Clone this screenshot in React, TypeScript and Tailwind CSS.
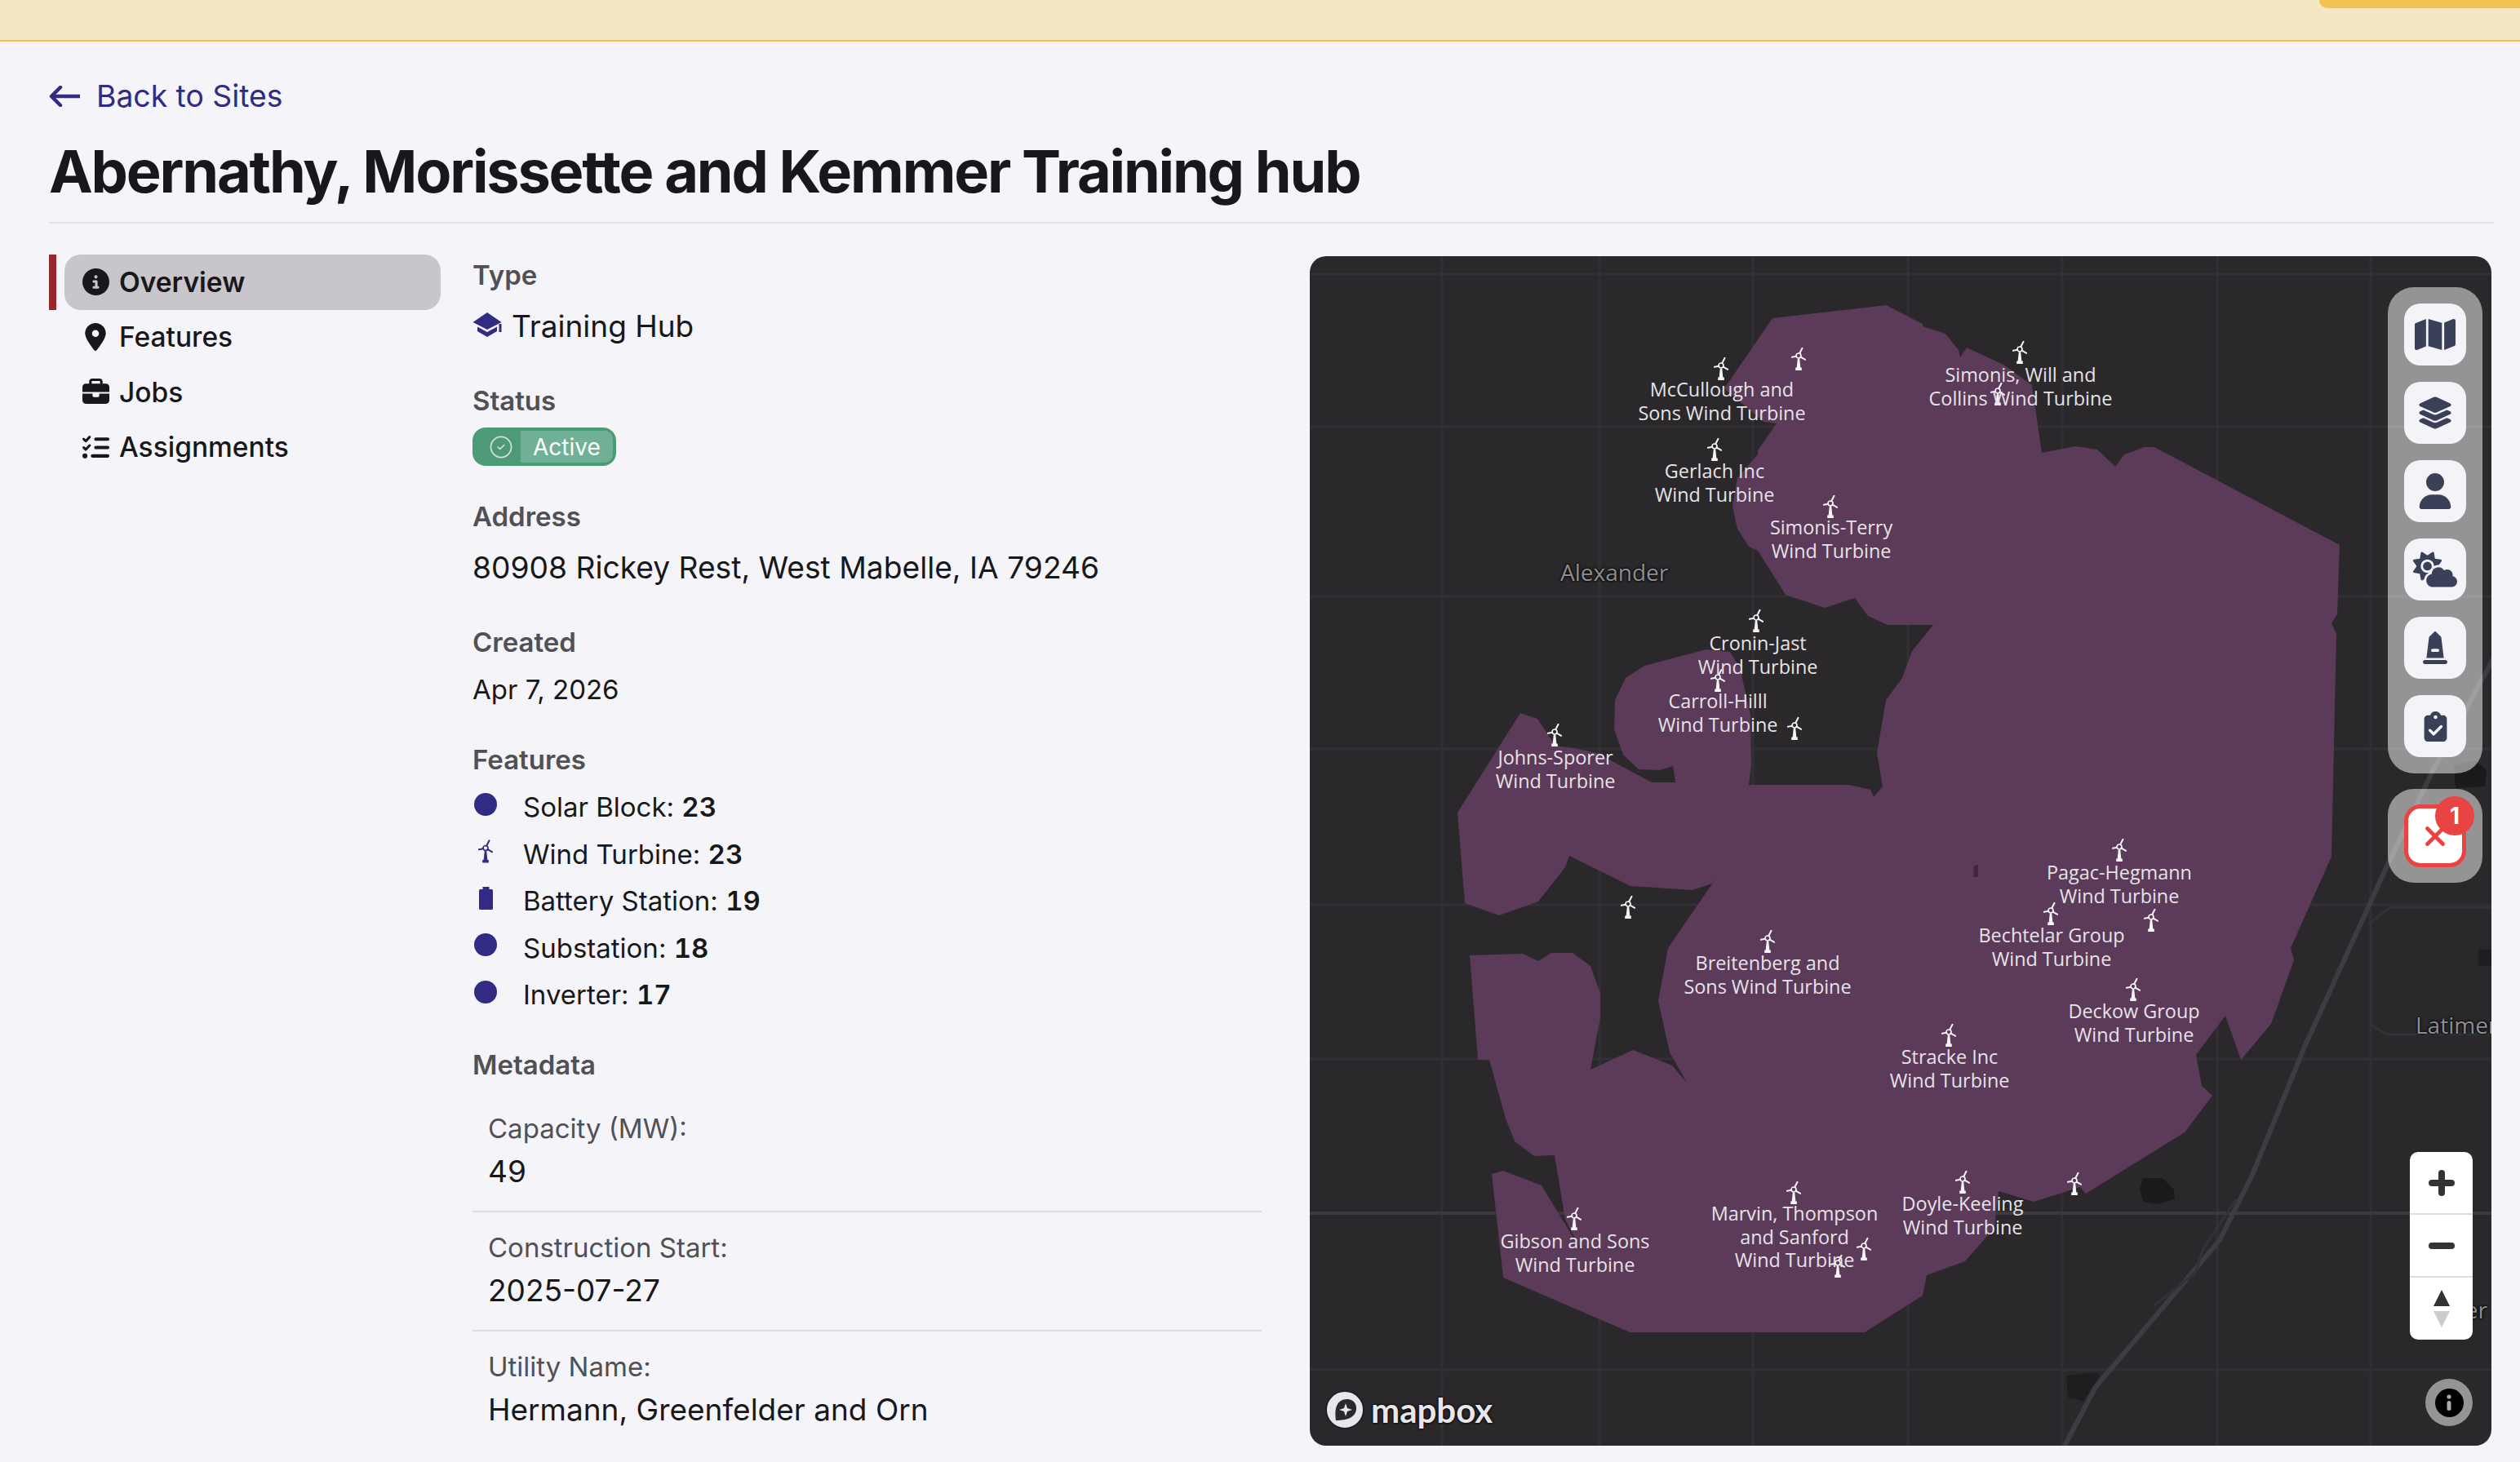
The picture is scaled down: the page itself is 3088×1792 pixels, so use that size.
import type { ReactNode } from 'react';
import { CircleCheck, X } from 'lucide-react';
import {
  FaBriefcase,
  FaCircleInfo,
  FaClipboardCheck,
  FaCloudSun,
  FaLayerGroup,
  FaListCheck,
  FaLocationDot,
  FaMap,
  FaMonument,
  FaUser,
} from 'react-icons/fa6';

// map origin in page pixels, pins below are written in page pixels too
const MAP_X = 1605;
const MAP_Y = 314;

const SITE_SHAPE =
  '2172,390 2311,374 2356,397 2356,400 2384,409 2400,429 2402,438 2410,426 2455,447 2490,472 2502,555 2543,547 2570,551 2592,572 2603,557 2628,548 2640,548 2867,668 2864,753 2857,764 2863,777 2857,1050 2807,1162 2811,1177 2783,1255 2746,1299 2727,1245 2691,1293 2698,1331 2711,1343 2677,1388 2556,1463 2549,1455 2492,1473 2449,1460 2444,1505 2408,1546 2361,1563 2356,1588 2285,1633 1997,1633 1842,1566 1828,1439 1842,1435 1889,1453 1939,1535 1918,1495 1905,1416 1880,1417 1856,1399 1845,1371 1825,1299 1811,1299 1801,1171 1866,1169 1885,1178 1901,1168 1927,1168 1949,1184 1961,1217 1961,1247 1949,1311 2001,1287 2049,1306 2067,1327 2046,1290 2032,1227 2044,1162 2079,1111 2108,1069 2098,1083 2074,1091 1998,1086 1923,1049 1918,1063 1885,1105 1837,1122 1795,1107 1786,996 1863,874 1884,881 1906,914 1928,917 1957,923 2024,959 2053,959 2050,939 2034,944 2008,943 1989,925 1978,894 1979,858 1992,831 2015,816 2091,796 2120,799 2132,818 2145,876 2146,938 2143,962 2266,962 2292,968 2296,977 2307,964 2300,923 2311,858 2331,831 2343,798 2369,766 2313,766 2289,755 2273,733 2236,745 2188,729 2154,675 2143,670 2129,648 2123,621 2129,586 2154,557 2154,552 2177,519 2161,517 2113,476';

const TURBINES = [
  [2109, 452], [2204, 440], [2475, 432], [2448, 483], [2101, 551], [2243, 621],
  [2152, 761], [2105, 834], [2199, 893], [1905, 901], [1995, 1112], [2597, 1042],
  [2513, 1120], [2636, 1128], [2614, 1213], [2166, 1154], [2388, 1269], [2405, 1449],
  [2542, 1451], [2198, 1462], [2284, 1531], [2252, 1552], [1929, 1494],
];

const LABELS = [
  { x: 2110, y: 491, lines: ['McCullough and', 'Sons Wind Turbine'] },
  { x: 2476, y: 473, lines: ['Simonis, Will and', 'Collins Wind Turbine'] },
  { x: 2101, y: 591, lines: ['Gerlach Inc', 'Wind Turbine'] },
  { x: 2244, y: 660, lines: ['Simonis-Terry', 'Wind Turbine'] },
  { x: 2154, y: 802, lines: ['Cronin-Jast', 'Wind Turbine'] },
  { x: 2105, y: 873, lines: ['Carroll-Hilll', 'Wind Turbine'] },
  { x: 1906, y: 942, lines: ['Johns-Sporer', 'Wind Turbine'] },
  { x: 2597, y: 1083, lines: ['Pagac-Hegmann', 'Wind Turbine'] },
  { x: 2514, y: 1160, lines: ['Bechtelar Group', 'Wind Turbine'] },
  { x: 2615, y: 1253, lines: ['Deckow Group', 'Wind Turbine'] },
  { x: 2166, y: 1194, lines: ['Breitenberg and', 'Sons Wind Turbine'] },
  { x: 2389, y: 1309, lines: ['Stracke Inc', 'Wind Turbine'] },
  { x: 2405, y: 1489, lines: ['Doyle-Keeling', 'Wind Turbine'] },
  { x: 2199, y: 1516, lines: ['Marvin, Thompson', 'and Sanford', 'Wind Turbine'] },
  { x: 1930, y: 1535, lines: ['Gibson and Sons', 'Wind Turbine'] },
];

const FEATURES = [
  { name: 'Solar Block', count: 23, icon: 'dot' },
  { name: 'Wind Turbine', count: 23, icon: 'wind' },
  { name: 'Battery Station', count: 19, icon: 'battery' },
  { name: 'Substation', count: 18, icon: 'dot' },
  { name: 'Inverter', count: 17, icon: 'dot' },
];

const METADATA = [
  { label: 'Capacity (MW):', value: '49' },
  { label: 'Construction Start:', value: '2025-07-27' },
  { label: 'Utility Name:', value: 'Hermann, Greenfelder and Orn' },
];

const NAV = [
  { label: 'Overview', icon: <FaCircleInfo size={33} />, active: true },
  { label: 'Features', icon: <FaLocationDot size={34} /> },
  { label: 'Jobs', icon: <FaBriefcase size={33} /> },
  { label: 'Assignments', icon: <FaListCheck size={33} /> },
];

const TurbineIcon = ({ className }: { className: string }) => (
  <svg viewBox="0 0 18 28" className={className} fill="none" stroke="currentColor" aria-hidden>
    <circle cx="9" cy="10" r="3" strokeWidth="1.7" />
    <path d="M10.2 7.2 13.5 0.8M6.2 10.8 0.8 11.8M11.6 11.6 17.2 14.8" strokeWidth="2" strokeLinecap="round" />
    <path d="M7.8 13.5h2.4l1.2 11.5H6.6z" fill="currentColor" stroke="none" />
    <rect x="5.2" y="24.5" width="7.6" height="3.5" fill="currentColor" stroke="none" />
  </svg>
);

const FeatureIcon = ({ icon }: { icon: string }) => {
  if (icon === 'wind') return <TurbineIcon className="h-[29px] w-[18px] text-[#312b83]" />;
  if (icon === 'battery') {
    return (
      <svg viewBox="0 0 17 28" className="h-[28px] w-[17px] text-[#312b83]" fill="currentColor" aria-hidden>
        <path d="M4.5 0h8v3h3a1.5 1.5 0 0 1 1.5 1.5V26.5a1.5 1.5 0 0 1-1.5 1.5h-14A1.5 1.5 0 0 1 0 26.5V4.5A1.5 1.5 0 0 1 1.5 3h3z" />
      </svg>
    );
  }
  return <span className="block h-[28px] w-[28px] rounded-full bg-[#312b83]" />;
};

const SectionLabel = ({ children }: { children: ReactNode }) => (
  <h3 className="h-[48px] text-[33px] leading-[48px] font-semibold text-[#505055]">{children}</h3>
);

const ToolButton = ({ children }: { children: ReactNode }) => (
  <div className="flex h-[76px] w-[76px] items-center justify-center rounded-[20px] bg-[#f3f3f8] text-[#3a4057]">
    {children}
  </div>
);

const SiteMap = () => (
  <div className="relative mt-[2px] h-[1458px] w-[1448px] shrink-0 overflow-hidden rounded-[20px] bg-[#2a282b] font-['Open_Sans',sans-serif]">
    <svg viewBox={`${MAP_X} ${MAP_Y} 1448 1458`} className="absolute inset-0 h-full w-full" aria-hidden>
      {/* section grid */}
      <g stroke="#323034" strokeWidth="3" fill="none">
        <path d="M1767 314V1772M1960 314V1772M2148 314V1772M2338 314V1772M2527 314V1772M2717 314V1772M2905 314V1772" />
        <path d="M1605 336H3053M1605 523H3053M1605 731H3053M1605 918H3053M1605 1109H3053M1605 1298H3053M1605 1679H3053" />
      </g>
      <path d="M1605 1487H3053" stroke="#3c3a3e" strokeWidth="4" fill="none" />
      {/* roads */}
      <path
        d="M3056 806 2980 947 2923 1066 2824 1283 2760 1440 2720 1520 2644 1610 2568 1700 2530 1772"
        stroke="#3e3c40"
        strokeWidth="6"
        fill="none"
      />
      <path d="M2740 1470 2700 1530 2690 1560 2640 1600" stroke="#343236" strokeWidth="3" fill="none" />
      <path d="M2905 1256V1130L2930 1112H3053M2905 1256L2925 1268H3053" stroke="#343236" strokeWidth="3" fill="none" />
      {/* ponds */}
      <path d="M2626 1444h24l14 14 1 12-22 6-17-3-4-16z" fill="#1a191b" />
      <path d="M2532 1686l38-4 3 4-20 31-19-4z" fill="#1e1d1f" />
      <path d="M3007 938l26-6 14 12-2 20-36 2z" fill="#1a191b" />
      <path d="M3037 1164h17v20h-17z" fill="#1e1d1f" />
      <polygon points={SITE_SHAPE} fill="#623c5e" fillOpacity="0.9" />
      <path d="M2419 1061l5-1v15h-6z" fill="#3a2a38" />
    </svg>

    {TURBINES.map(([x, y]) => (
      <div
        key={`${x}-${y}`}
        className="absolute -translate-x-1/2 -translate-y-1/2 text-[#f6f4f7]"
        style={{ left: x - MAP_X, top: y - MAP_Y }}
      >
        <TurbineIcon className="h-[29px] w-[18px]" />
      </div>
    ))}

    {LABELS.map((label) => (
      <div
        key={label.lines[0]}
        className="absolute -translate-x-1/2 -translate-y-1/2 text-center text-[23.4px] leading-[28.5px] whitespace-nowrap text-[#e6e3e7]"
        style={{ left: label.x - MAP_X, top: label.y - MAP_Y }}
      >
        {label.lines.map((line) => (
          <div key={line}>{line}</div>
        ))}
      </div>
    ))}

    <span className="absolute top-[369px] left-[307px] text-[28px] leading-[36px] text-[#8f8d90] [text-shadow:0_0_3px_#000,0_0_3px_#000]">
      Alexander
    </span>
    <span className="absolute top-[924px] left-[1355px] text-[28px] leading-[36px] text-[#8f8d90] [text-shadow:0_0_3px_#000,0_0_3px_#000]">
      Latimer
    </span>
    <span className="absolute top-[1273px] right-[5px] text-[28px] leading-[36px] text-[#8f8d90] [text-shadow:0_0_3px_#000,0_0_3px_#000]">
      er
    </span>

    {/* tool panels */}
    <div className="absolute top-[38px] right-[11px] flex flex-col gap-[19px]">
      <div className="flex w-[116px] flex-col items-center gap-[20px] rounded-[32px] bg-white/50 py-[20px]">
        <ToolButton><FaMap size={50} /></ToolButton>
        <ToolButton><FaLayerGroup size={44} /></ToolButton>
        <ToolButton><FaUser size={44} /></ToolButton>
        <ToolButton><FaCloudSun size={54} /></ToolButton>
        <ToolButton><FaMonument size={40} /></ToolButton>
        <ToolButton><FaClipboardCheck size={37} /></ToolButton>
      </div>
      <div className="flex h-[115px] w-[116px] items-center justify-center rounded-[32px] bg-white/50">
        <div className="relative flex h-[77px] w-[76px] items-center justify-center rounded-[20px] border-[5px] border-[#e94444] bg-white text-[#e94444]">
          <X size={38} strokeWidth={3} />
          <span className="absolute -top-[15px] -right-[15px] flex h-[48px] w-[48px] items-center justify-center rounded-full bg-[#e94444] font-['Inter',sans-serif] text-[28px] font-bold text-white">
            1
          </span>
        </div>
      </div>
    </div>

    {/* zoom control */}
    <div className="absolute top-[1098px] right-[23px] flex w-[77px] flex-col divide-y-2 divide-[#dcdcdc] rounded-[10px] bg-white">
      <div className="flex h-[77px] items-center justify-center">
        <svg viewBox="0 0 32 32" className="h-[32px] w-[32px]" stroke="#333" strokeWidth="8" strokeLinecap="round" aria-hidden>
          <path d="M4 16H28M16 4V28" />
        </svg>
      </div>
      <div className="flex h-[77px] items-center justify-center">
        <svg viewBox="0 0 32 32" className="h-[32px] w-[32px]" stroke="#333" strokeWidth="8" strokeLinecap="round" aria-hidden>
          <path d="M4 16H28" />
        </svg>
      </div>
      <div className="flex h-[76px] items-center justify-center">
        <svg viewBox="0 0 20 46" className="h-[46px] w-[20px]" aria-hidden>
          <path d="M10 0 20 20H0z" fill="#333" />
          <path d="M10 46 20 26H0z" fill="#ccc" />
        </svg>
      </div>
    </div>

    {/* attribution */}
    <div className="absolute right-[23px] bottom-[24px] flex h-[58px] w-[58px] items-center justify-center rounded-full bg-white/50">
      <span className="flex h-[35px] w-[35px] items-center justify-center rounded-full bg-black">
        <svg viewBox="0 0 8 20" className="h-[20px] w-[8px]" fill="#aaa" aria-hidden>
          <circle cx="4" cy="3" r="2.6" />
          <rect x="1.5" y="8" width="5" height="12" rx="2.5" />
        </svg>
      </span>
    </div>

    <div className="absolute bottom-[20px] left-[19px] flex items-center gap-[8px]">
      <svg viewBox="0 0 48 48" className="h-[48px] w-[48px]" aria-hidden>
        <circle cx="24" cy="24" r="23" fill="#e8e6ea" stroke="#1f1e20" strokeWidth="2" />
        <path d="M13 37C11 24 13 11 27 11c7 0 11 5 11 11 0 11-11 15-25 15z" fill="#2a282b" />
        <path d="M25 16l2 6 6 2-6 2-2 6-2-6-6-2 6-2z" fill="#e8e6ea" />
      </svg>
      <span className="font-['Lato',sans-serif] text-[42px] leading-[48px] font-bold text-[#e8e6ea] [text-shadow:0_0_3px_#000,0_0_3px_#000]">
        mapbox
      </span>
    </div>
  </div>
);

export default function App() {
  return (
    <div className="h-[1792px] overflow-hidden bg-[#f5f4f8] font-['Inter',sans-serif] text-[#18181b]">
      <div className="flex h-[51px] justify-end border-b-2 border-[#f4c04f] bg-[#f5e6c4]">
        <div className="h-[10px] w-[246px] rounded-bl-[16px] bg-[#f4c04f]" />
      </div>

      <main className="pt-[43px] pr-[32px] pl-[60px]">
        <a className="flex h-[48px] items-center gap-[20px] text-[37.3px] leading-[48px] text-[#312b83]">
          <svg viewBox="0 0 38 26" className="h-[26px] w-[38px]" fill="none" stroke="currentColor" strokeWidth="4.5" aria-hidden>
            <path d="M38 13H4M14 2 3 13l11 11" strokeLinejoin="round" strokeLinecap="round" />
          </svg>
          Back to Sites
        </a>
        <h1 className="mt-[28px] h-[80px] text-[72px] leading-[80px] font-bold tracking-[-0.03em] text-[#18181b]">
          Abernathy, Morissette and Kemmer Training hub
        </h1>
        <div className="mt-[22px] h-[2px] bg-[#e1e0e4]" />

        <div className="mt-[38px] flex">
          <nav className="w-[480px] shrink-0">
            {NAV.map((item) => (
              <div key={item.label} className="flex h-[67.5px] gap-[10px] text-[33.5px]">
                <span className={item.active ? 'w-[9px] bg-[#96272a]' : 'w-[9px]'} />
                <div
                  className={
                    item.active
                      ? 'flex flex-1 items-center rounded-[20px] bg-[#c8c6ca] pl-[21px] font-semibold'
                      : 'flex flex-1 items-center pl-[21px] font-medium'
                  }
                >
                  <span className="flex w-[34px] justify-center">{item.icon}</span>
                  <span className="ml-[12px]">{item.label}</span>
                </div>
              </div>
            ))}
          </nav>

          <section className="ml-[39px] w-[967px] shrink-0 pt-[1px]">
            <SectionLabel>Type</SectionLabel>
            <div className="mt-[13px] flex h-[52px] items-center text-[37px]">
              <svg viewBox="0 0 36 30" className="mr-[12px] h-[30px] w-[36px] -translate-y-[2px] text-[#312b83]" fill="currentColor" aria-hidden>
                <path d="M18 0 35.5 12 18 21 .5 12z" />
                <path d="M6 17.5 18 24l12-6.5V23L18 30 6 23z" />
                <path d="M32.5 14h3v10h-3z" />
              </svg>
              Training Hub
            </div>

            <div className="mt-[41px]">
              <SectionLabel>Status</SectionLabel>
            </div>
            <div className="mt-[9px] flex h-[47px] w-[176px] items-center rounded-[16px] bg-[#4f9a76] pr-[4px] text-white">
              <span className="flex w-[59px] justify-center pl-[10px]">
                <CircleCheck size={30} strokeWidth={1.4} className="text-[#d3e3da]" />
              </span>
              <span className="flex h-[39px] flex-1 items-center rounded-r-[10px] bg-[#6fb096] pl-[15px] text-[28px]">
                Active
              </span>
            </div>

            <div className="mt-[38px]">
              <SectionLabel>Address</SectionLabel>
            </div>
            <p className="mt-[13px] h-[52px] text-[37.2px] leading-[52px]">80908 Rickey Rest, West Mabelle, IA 79246</p>

            <div className="mt-[41px]">
              <SectionLabel>Created</SectionLabel>
            </div>
            <p className="mt-[10px] h-[48px] text-[33px] leading-[48px]">Apr 7, 2026</p>

            <div className="mt-[38px]">
              <SectionLabel>Features</SectionLabel>
            </div>
            <ul className="mt-[6.5px]">
              {FEATURES.map((feature) => (
                <li key={feature.name} className="flex h-[57.4px] items-center text-[33px]">
                  <span className="-mt-[8px] flex w-[32px] justify-center">
                    <FeatureIcon icon={feature.icon} />
                  </span>
                  <span className="ml-[30px]">
                    {feature.name}: <strong className="font-semibold tabular-nums">{feature.count}</strong>
                  </span>
                </li>
              ))}
            </ul>

            <div className="mt-[32.5px]">
              <SectionLabel>Metadata</SectionLabel>
            </div>
            <div className="mt-[11px]">
              {METADATA.map((row, i) => (
                <div
                  key={row.label}
                  className={
                    i < METADATA.length - 1
                      ? 'border-b-2 border-[#dddce0] px-[19px] pt-[19px] pb-[24px]'
                      : 'px-[19px] pt-[19px]'
                  }
                >
                  <div className="h-[48px] text-[33px] leading-[48px] text-[#505055]">{row.label}</div>
                  <div className="mt-[5px] h-[48px] text-[37px] leading-[48px]">{row.value}</div>
                </div>
              ))}
            </div>
          </section>

          <div className="ml-[59px]">
            <SiteMap />
          </div>
        </div>
      </main>
    </div>
  );
}
